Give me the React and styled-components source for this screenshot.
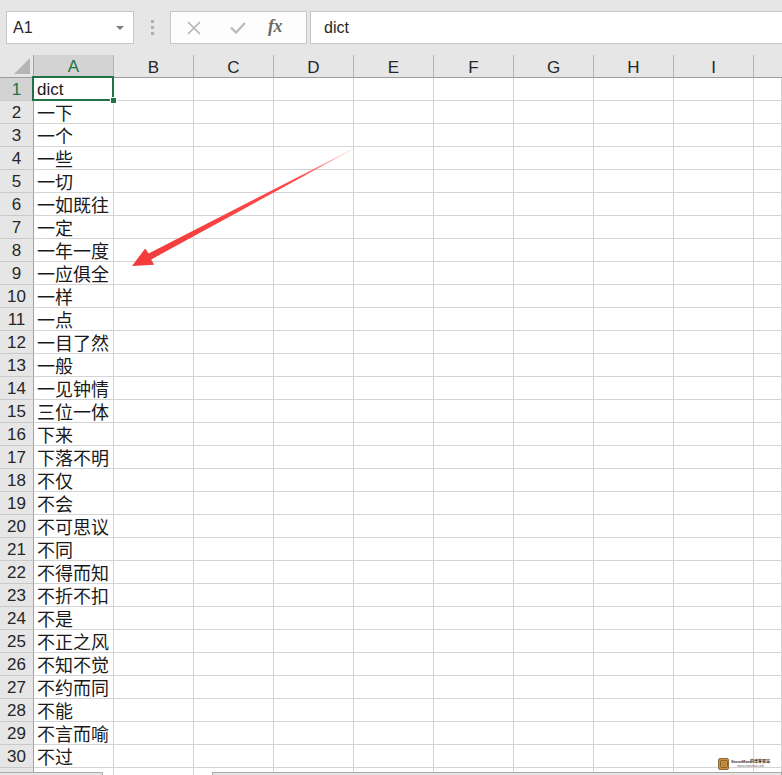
import React from 'react';
import styled, { createGlobalStyle, css } from 'styled-components';

const words = [
    'dict', '一下', '一个', '一些', '一切', '一如既往', '一定', '一年一度', '一应俱全', '一样',
    '一点', '一目了然', '一般', '一见钟情', '三位一体', '下来', '下落不明', '不仅', '不会', '不可思议',
    '不同', '不得而知', '不折不扣', '不是', '不正之风', '不知不觉', '不约而同', '不能', '不言而喻', '不过',
];

const columns = ['A', 'B', 'C', 'D', 'E', 'F', 'G', 'H', 'I', ''];

function App() {
    const rows = [...words, ''];

    return (
        <Page>
            <GlobalStyle />
            <Toolbar>
                <NameBox>
                    A1
                    <Caret />
                </NameBox>
                <Grip>
                    <i /><i /><i />
                </Grip>
                <FxBox>
                    <svg width="14" height="14" viewBox="0 0 14 14">
                        <path d="M1 1 L13 13 M13 1 L1 13" stroke="#b4b4b4" strokeWidth="1.6" fill="none" />
                    </svg>
                    <svg width="16" height="12" viewBox="0 0 16 12">
                        <path d="M1 5.5 L6 10.5 L15 1" stroke="#bdbdbd" strokeWidth="2.4" fill="none" />
                    </svg>
                    <FxLabel>fx</FxLabel>
                </FxBox>
                <FormulaBox>dict</FormulaBox>
            </Toolbar>

            <Sheet>
                <Corner>
                    <svg width="16" height="16" viewBox="0 0 16 16">
                        <polygon points="16,0 16,16 0,16" fill="#b5b5b5" />
                    </svg>
                </Corner>
                {columns.map((c, i) => (
                    <ColHead key={c || 'J'} $active={i === 0} $last={i === columns.length - 1}>{c}</ColHead>
                ))}
                {rows.map((w, r) => (
                    <React.Fragment key={r}>
                        <RowHead $active={r === 0}>{r < 30 ? r + 1 : ''}</RowHead>
                        {columns.map((c, i) => (
                            <Cell key={i} $selected={r === 0 && i === 0} $latin={r === 0}>
                                {i === 0 ? w : ''}
                            </Cell>
                        ))}
                    </React.Fragment>
                ))}
            </Sheet>

            <BottomBar>
                <TabBox $w="103px" />
                <BottomGap />
                <TabBox $grow />
            </BottomBar>

            <Arrow width="782" height="775" viewBox="0 0 782 775">
                <defs>
                    <linearGradient id="arrowFade" x1="355" y1="148" x2="132" y2="266" gradientUnits="userSpaceOnUse">
                        <stop offset="0" stopColor="#ff8a8a" stopOpacity="0.4" />
                        <stop offset="0.25" stopColor="#ff4a4a" />
                        <stop offset="1" stopColor="#f23a3a" />
                    </linearGradient>
                </defs>
                <polygon
                    points="355.2,147.7 148.6,253.6 145.2,248.4 132,266 154.2,264.8 151.2,259.4 354.8,148.3"
                    fill="url(#arrowFade)"
                />
            </Arrow>

            <Watermark>
                <WmIcon>
                    <svg width="8" height="8" viewBox="0 0 8 8">
                        <rect x="0.5" y="0.5" width="7" height="7" rx="1" fill="none" stroke="#7a5520" strokeWidth="0.8" />
                        <circle cx="2.8" cy="3" r="0.6" fill="#7a5520" />
                        <circle cx="5.2" cy="3" r="0.6" fill="#7a5520" />
                        <path d="M2.5 5.3 Q4 6.3 5.5 5.3" stroke="#7a5520" strokeWidth="0.6" fill="none" />
                    </svg>
                </WmIcon>
                <WmText>
                    <span>StoneMan的博客驿站</span>
                    <small>www.stoneman.com</small>
                </WmText>
            </Watermark>
        </Page>
    );
}

export default App;

const GlobalStyle = createGlobalStyle`
    html, body {
        margin: 0;
        padding: 0;
        background: #fff;
        overflow: hidden;
    }
    body {
        font-family: "Liberation Sans", "Noto Sans CJK SC", sans-serif;
    }
`;

const Page = styled.div`
    position: relative;
    width: 782px;
    height: 775px;
    overflow: hidden;
    display: flex;
    flex-direction: column;
    background: #fff;
`;

const Toolbar = styled.div`
    height: 55px;
    flex: none;
    box-sizing: border-box;
    background: #e6e6e6;
    display: flex;
    align-items: flex-start;
    padding: 11px 0 0 6px;
`;

const boxBase = css`
    height: 33px;
    box-sizing: border-box;
    border: 1px solid #c6c6c6;
    display: flex;
    align-items: center;
`;

const NameBox = styled.div`
    ${boxBase};
    width: 128px;
    background: #fff;
    padding: 0 0 0 6px;
    font-size: 16px;
    color: #262626;
    justify-content: space-between;
`;

const Caret = styled.span`
    width: 0;
    height: 0;
    margin-right: 9px;
    border-left: 4px solid transparent;
    border-right: 4px solid transparent;
    border-top: 4px solid #7d7d7d;
`;

const Grip = styled.div`
    width: 36px;
    height: 33px;
    display: flex;
    flex-direction: column;
    align-items: center;
    justify-content: center;
    gap: 3px;

    i {
        width: 3px;
        height: 3px;
        background: #b0b0b0;
    }
`;

const FxBox = styled.div`
    ${boxBase};
    width: 137px;
    background: #fdfdfd;
    padding: 0 0 0 16px;

    svg:nth-child(1) {
        margin-right: 29px;
    }
    svg:nth-child(2) {
        margin-right: 22px;
    }
`;

const FxLabel = styled.span`
    font-family: "Liberation Serif", "DejaVu Serif", serif;
    font-style: italic;
    font-weight: bold;
    font-size: 18px;
    color: #6a6a6a;
    margin-top: -2px;
    letter-spacing: -0.5px;
`;

const FormulaBox = styled.div`
    ${boxBase};
    flex: 1;
    margin: 0 -4px 0 3px;
    background: #fff;
    padding-left: 13px;
    font-size: 16px;
    color: #262626;
`;

const Sheet = styled.div`
    flex: 1 1 auto;
    min-height: 0;
    overflow: hidden;
    display: grid;
    grid-template-columns: 34px repeat(9, 80px) 1fr;
    grid-auto-rows: 23px;
    align-content: start;
`;

const headBase = css`
    box-sizing: border-box;
    background: #e6e6e6;
    display: flex;
    align-items: center;
    justify-content: center;
    font-family: "Liberation Sans", sans-serif;
    font-size: 17px;
    line-height: 19px;
    color: #262626;
`;

const Corner = styled.div`
    ${headBase};
    border-right: 1px solid #a3a3a3;
    border-bottom: 1px solid #9c9c9c;
    align-items: flex-end;
    justify-content: flex-end;
    padding: 0 3px 3px 0;
`;

const ColHead = styled.div`
    ${headBase};
    border-bottom: 1px solid #9c9c9c;
    border-right: ${p => (p.$last ? 'none' : '1px solid #b4b4b4')};
    padding-top: 2px;
    ${p => p.$active && css`
        background: #d3d3d3;
        color: #217346;
        border-bottom: 2px solid #217346;
    `}
`;

const RowHead = styled.div`
    ${headBase};
    border-right: 1px solid #a3a3a3;
    border-bottom: 1px solid #c9c9c9;
    padding-top: 1px;
    ${p => p.$active && css`
        background: #d3d3d3;
        color: #217346;
    `}
`;

const Cell = styled.div`
    position: relative;
    box-sizing: border-box;
    border-right: 1px solid #d4d4d4;
    border-bottom: 1px solid #d4d4d4;
    padding: ${p => (p.$latin ? '2px 0 0 3px' : '0 0 0 3px')};
    display: flex;
    align-items: center;
    white-space: nowrap;
    color: #1a1a1a;
    line-height: 20px;
    font-family: ${p => (p.$latin ? '"Liberation Sans", sans-serif' : '"Noto Sans CJK SC", sans-serif')};
    font-size: ${p => (p.$latin ? '17px' : '18px')};

    ${p => p.$selected && css`
        &::after {
            content: "";
            position: absolute;
            top: -2px;
            left: -2px;
            right: -1px;
            bottom: -1px;
            border: 2px solid #217346;
            z-index: 2;
        }
        &::before {
            content: "";
            position: absolute;
            right: -3px;
            bottom: -3px;
            width: 5px;
            height: 5px;
            background: #217346;
            outline: 1px solid #fff;
            z-index: 3;
        }
    `}
`;

const BottomBar = styled.div`
    height: 3px;
    flex: none;
    display: flex;
`;

const TabBox = styled.div`
    box-sizing: border-box;
    width: ${p => p.$w || 'auto'};
    flex: ${p => (p.$grow ? '1' : 'none')};
    background: #e6e6e6;
    border-top: 1px solid #a9a9a9;
    border-right: 1px solid #a9a9a9;
    border-left: ${p => (p.$grow ? '1px solid #a9a9a9' : 'none')};
`;

const BottomGap = styled.div`
    width: 109px;
    flex: none;
    background:
        linear-gradient(#d4d4d4, #d4d4d4) 10px 0 / 1px 100% no-repeat,
        linear-gradient(#d4d4d4, #d4d4d4) 90px 0 / 1px 100% no-repeat,
        #fff;
`;

const Arrow = styled.svg`
    position: absolute;
    left: 0;
    top: 0;
    pointer-events: none;
`;

const Watermark = styled.div`
    position: absolute;
    left: 718px;
    top: 758px;
    display: flex;
    align-items: center;
    gap: 2px;
`;

const WmIcon = styled.div`
    width: 11px;
    height: 12px;
    border-radius: 2px;
    background: #c99544;
    border: 1px solid #8a6a3a;
    box-sizing: border-box;
    display: flex;
    align-items: center;
    justify-content: center;
`;

const WmText = styled.div`
    display: flex;
    flex-direction: column;
    align-items: center;
    font-family: "Liberation Sans", "Noto Sans CJK SC", sans-serif;
    color: #333;
    line-height: 5px;

    span {
        font-size: 4px;
        font-weight: bold;
    }
    small {
        font-size: 3px;
        color: #666;
    }
`;
